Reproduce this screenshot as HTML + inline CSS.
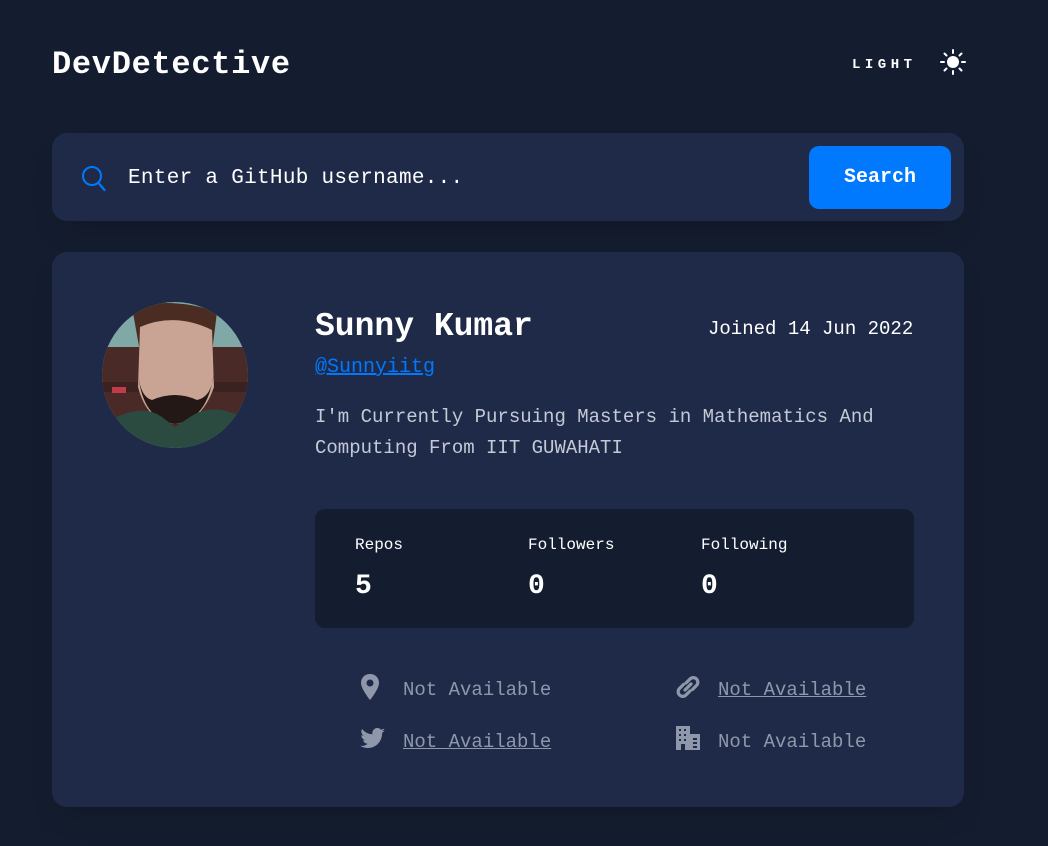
<!DOCTYPE html>
<html><head><meta charset="utf-8"><style>
*{margin:0;padding:0;box-sizing:border-box}
body{width:1048px;height:846px;background:#141d2f;font-family:"Liberation Mono",monospace;color:#fff;position:relative;overflow:hidden}
.a{position:absolute;white-space:nowrap}
.muted{color:#8f98ab}
</style></head><body>
<div class="a" style="left:52px;top:43px;font-size:32px;font-weight:bold;line-height:44px;letter-spacing:0.7px">DevDetective</div>
<div class="a" style="left:852px;top:56px;font-size:14px;font-weight:bold;letter-spacing:4.5px;line-height:18px">LIGHT</div>
<svg class="a" style="left:940px;top:49px" width="26" height="26" viewBox="0 0 26 26"><circle cx="13" cy="13" r="6" fill="#fff"/><g stroke="#fff" stroke-width="2" stroke-linecap="round"><path d="M13 1v3M13 22v3M1 13h3M22 13h3M4.5 4.5l2 2M19.5 19.5l2 2M4.5 21.5l2-2M19.5 6.5l2-2"/></g></svg>

<div class="a" style="left:52px;top:133px;width:912px;height:88px;background:#1e2a47;border-radius:15px;box-shadow:0 16px 30px -10px rgba(0,0,0,.2)"></div>
<svg class="a" style="left:81px;top:165px" width="26" height="28" viewBox="0 0 26 28"><circle cx="11" cy="11" r="9" fill="none" stroke="#0079ff" stroke-width="2"/><path d="M17.5 18l6 7" stroke="#0079ff" stroke-width="2.2" stroke-linecap="round"/></svg>
<div class="a" style="left:128px;top:165px;font-size:21px;line-height:28px;letter-spacing:0.3px">Enter a GitHub username...</div>
<div class="a" style="left:809px;top:146px;width:142px;height:63px;background:#0079ff;border-radius:10px;text-align:center;line-height:63px;font-size:20px;font-weight:bold">Search</div>

<div class="a" style="left:52px;top:252px;width:912px;height:555px;background:#1e2a47;border-radius:15px;box-shadow:0 16px 30px -10px rgba(0,0,0,.2)"></div>
<svg class="a" style="left:102px;top:302px" width="146" height="146" viewBox="0 0 146 146">
<defs><clipPath id="c"><circle cx="73" cy="73" r="73"/></clipPath></defs>
<g clip-path="url(#c)">
<rect width="146" height="146" fill="#7fa8a6"/>
<rect y="45" width="146" height="80" fill="#4a2a26"/>
<rect x="0" y="80" width="146" height="10" fill="#3a2220"/>
<rect x="10" y="85" width="14" height="6" fill="#c23b4a"/>
<path d="M30 5 Q73 -5 115 10 L110 50 L38 50Z" fill="#4a2c22"/>
<path d="M38 25 Q73 10 110 28 L112 85 Q100 120 73 122 Q45 120 36 85Z" fill="#c9a394"/>
<path d="M36 70 Q40 118 73 122 Q106 118 112 70 Q110 95 95 98 Q73 88 50 98 Q38 95 36 70Z" fill="#231815"/>
<path d="M0 146 L5 120 Q40 100 60 115 L73 125 L88 115 Q110 100 140 115 L146 146Z" fill="#2b4a40"/>
</g></svg>

<div class="a" style="left:315px;top:306px;font-size:33px;font-weight:bold;line-height:42px">Sunny Kumar</div>
<div class="a" style="left:708px;top:316px;font-size:19px;line-height:26px">Joined 14 Jun 2022</div>
<div class="a" style="left:315px;top:355px;font-size:20px;line-height:26px;color:#0079ff;text-decoration:underline">@Sunnyiitg</div>
<div class="a" style="left:315px;top:402px;font-size:19px;line-height:31px;color:#c3c9d6;white-space:normal;width:600px">I'm Currently Pursuing Masters in Mathematics And Computing From IIT GUWAHATI</div>

<div class="a" style="left:315px;top:509px;width:599px;height:119px;background:#141d2f;border-radius:10px"></div>
<div class="a" style="left:355px;top:535px;font-size:16px;line-height:20px">Repos</div>
<div class="a" style="left:528px;top:535px;font-size:16px;line-height:20px">Followers</div>
<div class="a" style="left:701px;top:535px;font-size:16px;line-height:20px">Following</div>
<div class="a" style="left:355px;top:570px;font-size:28px;font-weight:bold;line-height:34px">5</div>
<div class="a" style="left:528px;top:570px;font-size:28px;font-weight:bold;line-height:34px">0</div>
<div class="a" style="left:701px;top:570px;font-size:28px;font-weight:bold;line-height:34px">0</div>

<svg class="a" style="left:360px;top:674px" width="20" height="26" viewBox="0 0 20 26"><path d="M10 0C4.5 0 1 4 1 9c0 6 9 17 9 17s9-11 9-17c0-5-3.5-9-9-9z" fill="#8f98ab"/><circle cx="10" cy="9" r="3.5" fill="#1e2a47"/></svg>
<div class="a muted" style="left:403px;top:677px;font-size:19px;line-height:26px">Not Available</div>
<svg class="a" style="left:675px;top:674px" width="26" height="26" viewBox="0 0 26 26"><g fill="none" stroke="#8f98ab" stroke-width="3.2" stroke-linecap="round"><path d="M11 9l4-4a4.5 4.5 0 0 1 6.5 6.5l-4 4"/><path d="M15 17l-4 4a4.5 4.5 0 0 1-6.5-6.5l4-4"/><path d="M10 16l6-6"/></g></svg>
<div class="a muted" style="left:718px;top:677px;font-size:19px;line-height:26px;text-decoration:underline">Not Available</div>
<svg class="a" style="left:360px;top:728px" width="26" height="22" viewBox="0 0 26 22"><path d="M25 2.5c-.9.4-1.9.7-2.9.8 1-.6 1.8-1.6 2.2-2.8-1 .6-2.100 1-3.2 1.2A5 5 0 0 0 12.5 6.3 14.3 14.3 0 0 1 2 1a5 5 0 0 0 1.6 6.7c-.8 0-1.6-.3-2.3-.6 0 2.4 1.7 4.5 4 5-.7.2-1.5.2-2.3.1.7 2 2.5 3.4 4.7 3.5A10 10 0 0 1 0 17.800 14.3 14.3 0 0 0 7.7 20c9.3 0 14.4-7.7 14.4-14.4v-.7c1.1-.7 2-1.6 2.9-2.4z" fill="#8f98ab"/></svg>
<div class="a muted" style="left:403px;top:729px;font-size:19px;line-height:26px;text-decoration:underline">Not Available</div>
<svg class="a" style="left:675px;top:725px" width="26" height="26" viewBox="0 0 26 26"><path d="M1 1h14v24H1z" fill="#8f98ab"/><path d="M15 9h10v16H15z" fill="#8f98ab"/><g fill="#1e2a47"><rect x="4" y="4" width="2" height="2"/><rect x="9" y="4" width="2" height="2"/><rect x="4" y="9" width="2" height="2"/><rect x="9" y="9" width="2" height="2"/><rect x="4" y="14" width="2" height="2"/><rect x="9" y="14" width="2" height="2"/><rect x="6" y="19" width="4" height="6"/><rect x="18" y="13" width="4" height="2"/><rect x="18" y="17" width="4" height="2"/><rect x="18" y="21" width="4" height="2"/></g></svg>
<div class="a muted" style="left:718px;top:729px;font-size:19px;line-height:26px">Not Available</div>
</body></html>
